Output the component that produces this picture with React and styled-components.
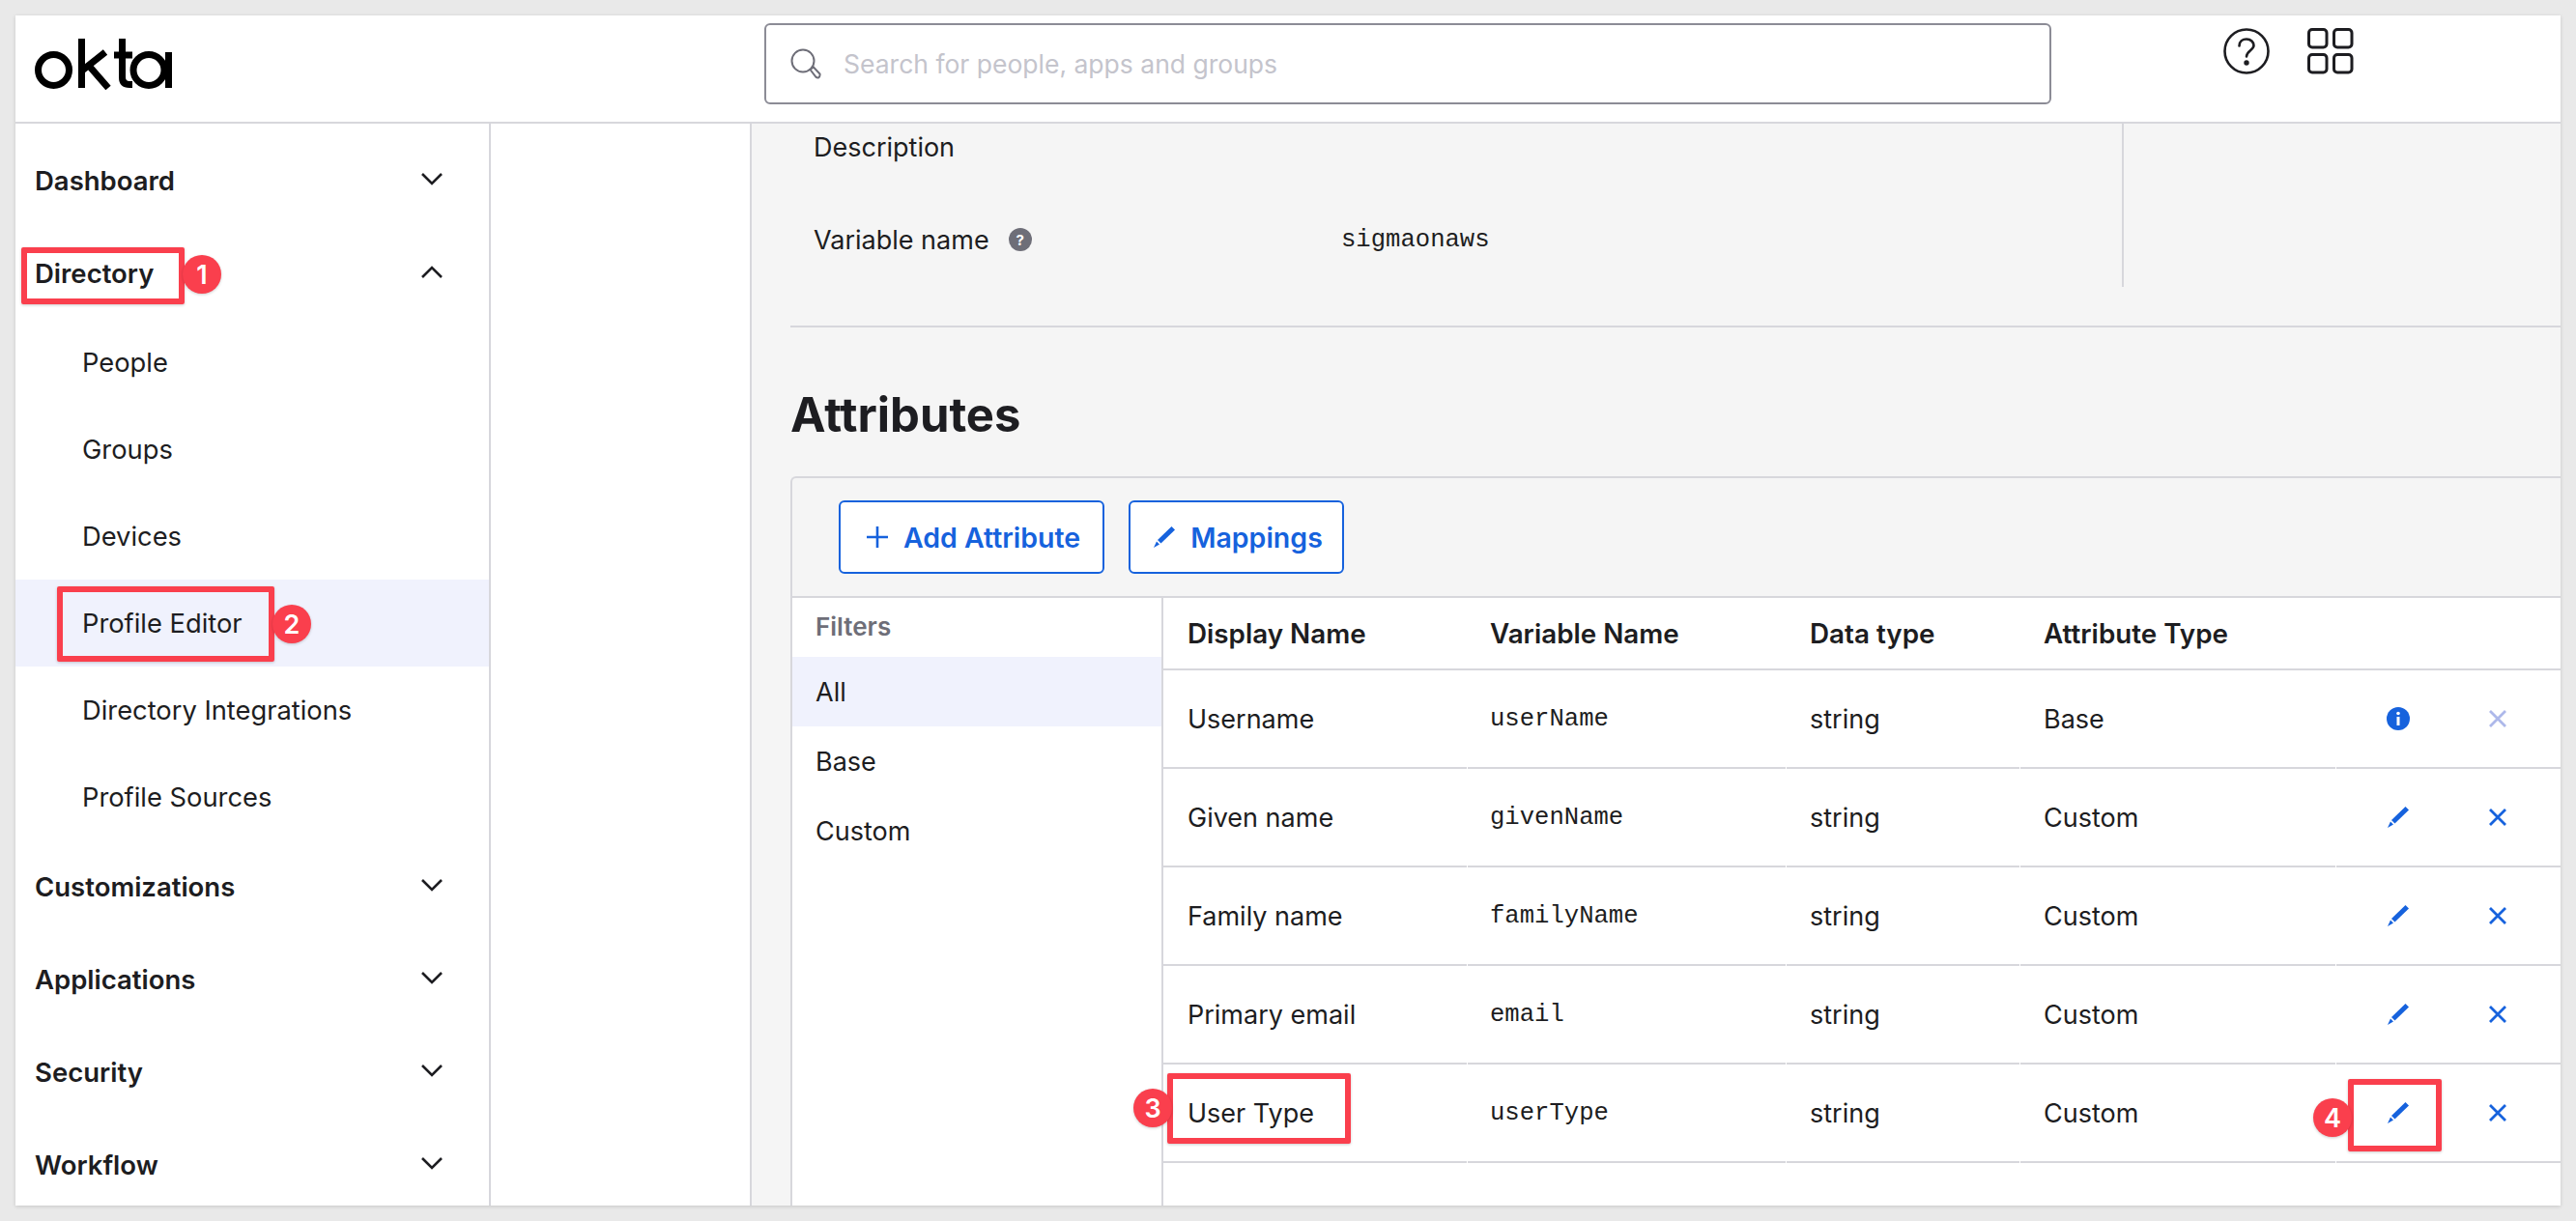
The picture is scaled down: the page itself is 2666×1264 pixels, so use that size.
import styled, { createGlobalStyle } from "styled-components";

const GlobalStyle = createGlobalStyle`
  * { box-sizing: border-box; }
  html, body { margin: 0; background: #e9e9e9; }
  body { font-family: Inter, "Liberation Sans", sans-serif; color: #1d1d21; }
`;

const Page = styled.div`
  padding: 16px;
  height: 1264px;
  overflow: hidden;
`;

const Frame = styled.div`
  position: relative;
  width: 2634px;
  height: 1232px;
  background: #fff;
  overflow: hidden;
  box-shadow: 0 1px 4px rgba(0, 0, 0, 0.15);
`;

const Header = styled.header`
  height: 112px;
  display: flex;
  align-items: flex-start;
  border-bottom: 2px solid #d7d7dc;
`;

const LogoWrap = styled.div`
  width: 775px;
  padding: 23px 0 0 20px;
`;

const SearchBox = styled.div`
  width: 1332px;
  height: 84px;
  margin-top: 8px;
  border: 2px solid #8c8c96;
  border-radius: 6px;
  display: flex;
  align-items: center;
  gap: 23px;
  padding-left: 25px;
`;

const Placeholder = styled.span`
  font-size: 26.5px;
  color: #c4c4cc;
`;

const HeaderIcons = styled.div`
  display: flex;
  align-items: center;
  gap: 39px;
  margin: 13px 0 0 178px;
`;

const Main = styled.div`
  display: flex;
  height: 1120px;
`;

const Sidebar = styled.nav`
  width: 492px;
  flex: none;
  padding-top: 11px;
  border-right: 2px solid #d7d7dc;
`;

const NavRow = styled.div`
  height: 96px;
  padding: 0 48px 0 20px;
  display: flex;
  align-items: center;
  justify-content: space-between;
  font-size: 27.5px;
  font-weight: 600;

  svg {
    margin-top: -3px;
  }
`;

const SubRow = styled.div`
  height: 90px;
  padding-left: 69px;
  display: flex;
  align-items: center;
  font-size: 27.3px;
  background: ${(p) => (p.$active ? "#f0f2fd" : "transparent")};
`;

const SubNav = styled.div`
  margin-top: -1px;
`;

const Rail = styled.div`
  width: 270px;
  flex: none;
  border-right: 2px solid #d7d7dc;
`;

const Content = styled.main`
  flex: 1;
  background: #f5f5f5;
  padding-left: 40px;
`;

const InfoPanel = styled.section`
  width: 1380px;
  height: 169px;
  padding: 8px 0 0 24px;
  border-right: 2px solid #d7d7dc;
`;

const InfoRow = styled.div`
  display: flex;
  align-items: center;
  height: 32px;
  margin-bottom: 64px;
  font-size: 27px;
`;

const InfoLabel = styled.div`
  width: 546px;
  display: flex;
  align-items: center;
  gap: 20px;
`;

const Mono = styled.span`
  font-family: "Liberation Mono", monospace;
  font-size: 25.6px;
`;

const HelpDot = styled.span`
  width: 24px;
  height: 24px;
  border-radius: 50%;
  background: #6e6e78;
  color: #fff;
  font-size: 15px;
  font-weight: 700;
  display: flex;
  align-items: center;
  justify-content: center;
`;

const Rule = styled.hr`
  height: 2px;
  margin: 40px 0 0;
  border: 0;
  background: #d7d7dc;
`;

const Heading = styled.h2`
  margin: 61px 0 33px;
  font-size: 49px;
  line-height: 60px;
  font-weight: 700;
`;

const Card = styled.section`
  height: 760px;
  border: 2px solid #d7d7dc;
  border-width: 2px 0 0 2px;
  border-top-left-radius: 6px;
`;

const Toolbar = styled.div`
  height: 124px;
  display: flex;
  align-items: center;
  gap: 25px;
  padding-left: 48px;
  border-bottom: 2px solid #d7d7dc;
`;

const Button = styled.button`
  height: 76px;
  width: ${(p) => p.$width}px;
  display: flex;
  align-items: center;
  justify-content: center;
  gap: 16px;
  background: #fff;
  color: #1662dd;
  border: 2px solid #1662dd;
  border-radius: 6px;
  font-family: inherit;
  font-size: 28.5px;
  font-weight: 600;
  padding: 0 0 0 4px;
`;

const CardBody = styled.div`
  display: flex;
  height: 640px;
  background: #fff;
`;

const Filters = styled.aside`
  width: 384px;
  flex: none;
  border-right: 2px solid #d7d7dc;
`;

const FilterTitle = styled.div`
  height: 61px;
  padding: 14px 0 0 24px;
  font-size: 26px;
  font-weight: 600;
  line-height: 32px;
  color: #6e6e78;
`;

const FilterItem = styled.div`
  height: 72px;
  padding-left: 24px;
  display: flex;
  align-items: center;
  font-size: 27px;
  background: ${(p) => (p.$active ? "#f0f2fd" : "transparent")};
`;

const Table = styled.div`
  flex: 1;
`;

const Columns = styled.div`
  display: grid;
  grid-template-columns: 315px 330px 242px 327px 1fr;
  height: ${(p) => p.$height}px;

  & > :first-child {
    padding-left: 25px;
  }

  & > :nth-child(2) {
    padding-left: 23px;
  }
`;

const HeadCell = styled.div`
  display: flex;
  align-items: center;
  padding-left: 24px;
  font-size: 27.8px;
  font-weight: 600;
  border-bottom: 2px solid #d7d7dc;
`;

const Cell = styled.div`
  display: flex;
  align-items: center;
  padding-left: 24px;
  font-size: 27px;
  margin-right: 1px;
  border-bottom: 2px solid #d7d7dc;
`;

const ActionCell = styled.div`
  display: grid;
  grid-template-columns: 128px 78px;
  align-items: center;
  justify-items: center;
  border-bottom: 2px solid #d7d7dc;
`;

const Callout = styled.div`
  position: absolute;
  left: ${(p) => p.$x - 16}px;
  top: ${(p) => p.$y - 16}px;
  width: ${(p) => p.$w}px;
  height: ${(p) => p.$h}px;
  border: 6px solid #fa3f4d;
  border-radius: 2px;
  box-shadow: 0 1px 3px rgba(0, 0, 0, 0.2);
`;

const Badge = styled.div`
  position: absolute;
  left: ${(p) => p.$x - 36}px;
  top: ${(p) => p.$y - 36}px;
  width: 40px;
  height: 40px;
  border-radius: 50%;
  background: #fa3f4d;
  color: #fff;
  font-size: 27px;
  font-weight: 600;
  display: flex;
  align-items: center;
  justify-content: center;
  box-shadow: 0 1px 3px rgba(0, 0, 0, 0.2);
`;

const OktaLogo = () => (
  <svg width="146" height="54" viewBox="0 0 146 54" fill="none" stroke="#000" strokeWidth="7">
    <circle cx="19.5" cy="33.5" r="16" />
    <path d="M48.5 1V52M49 34L73 15M56 29L76 52" />
    <path d="M90.5 1V41Q90.5 48.5 98 48.5H101M82 18H101" />
    <circle cx="118" cy="33.5" r="16" />
    <path d="M138.5 15V52" />
  </svg>
);

const HelpIcon = () => (
  <svg width="48" height="48" viewBox="0 0 48 48" fill="none" stroke="#1d1d21" strokeWidth="2.6" strokeLinecap="round">
    <circle cx="24" cy="24" r="22.5" />
    <path d="M16.5 18.5C16.5 14 20 11.5 24 11.5C28.5 11.5 31.5 14.5 31.5 18C31.5 23 24 23.5 24 29.5" />
    <circle cx="24" cy="36" r="1.4" fill="#1d1d21" />
  </svg>
);

const AppsIcon = () => (
  <svg width="48" height="48" viewBox="0 0 48 48" fill="none" stroke="#1d1d21" strokeWidth="3">
    <rect x="1.5" y="1.5" width="18.5" height="18.5" rx="3.5" />
    <rect x="27.5" y="1.5" width="18.5" height="18.5" rx="3.5" />
    <rect x="1.5" y="27.5" width="18.5" height="18.5" rx="3.5" />
    <rect x="27.5" y="27.5" width="18.5" height="18.5" rx="3.5" />
  </svg>
);

const SearchIcon = () => (
  <svg width="32" height="32" viewBox="0 0 32 32" fill="none" stroke="#6e6e78" strokeWidth="2">
    <circle cx="13" cy="13" r="11.5" />
    <path d="M20.5 22L24 19.5L30.5 26.5Q31 29 29 30.5Q27.5 30.8 26.5 29.8Z" />
  </svg>
);

const Chevron = ({ up }) => (
  <svg width="22" height="13" viewBox="0 0 22 13" fill="none" stroke="#1d1d21" strokeWidth="2.6">
    <path d={up ? "M1 12L11 2L21 12" : "M1 1L11 11L21 1"} />
  </svg>
);

const PencilIcon = () => (
  <svg width="22" height="22" viewBox="0 0 22 22" fill="#1662dd">
    <path d="M18.5 0L22 3.5L7.5 17.5L4 14Z" />
    <path d="M3 15.5L6 18.5L0 22Z" />
  </svg>
);

const PlusIcon = () => (
  <svg width="22" height="22" viewBox="0 0 22 22" stroke="#1662dd" strokeWidth="2.6">
    <path d="M11 0V22M0 11H22" />
  </svg>
);

const CloseIcon = ({ muted }) => (
  <svg width="18" height="18" viewBox="0 0 18 18" stroke={muted ? "#adb8ea" : "#1662dd"} strokeWidth="2.8">
    <path d="M1 1L17 17M17 1L1 17" />
  </svg>
);

const InfoIcon = () => (
  <svg width="24" height="24" viewBox="0 0 24 24">
    <circle cx="12" cy="12" r="12" fill="#1662dd" />
    <rect x="10.5" y="10" width="3" height="9" fill="#fff" />
    <circle cx="12" cy="6.5" r="1.8" fill="#fff" />
  </svg>
);

const topBefore = ["Dashboard"];
const subItems = ["People", "Groups", "Devices", "Profile Editor", "Directory Integrations", "Profile Sources"];
const topAfter = ["Customizations", "Applications", "Security", "Workflow"];

const attributes = [
  { name: "Username", variable: "userName", type: "Base", locked: true },
  { name: "Given name", variable: "givenName", type: "Custom" },
  { name: "Family name", variable: "familyName", type: "Custom" },
  { name: "Primary email", variable: "email", type: "Custom" },
  { name: "User Type", variable: "userType", type: "Custom" },
];

const App = () => {
  return (
    <Page>
      <GlobalStyle />
      <Frame>
        <Header>
          <LogoWrap>
            <OktaLogo />
          </LogoWrap>
          <SearchBox>
            <SearchIcon />
            <Placeholder>Search for people, apps and groups</Placeholder>
          </SearchBox>
          <HeaderIcons>
            <HelpIcon />
            <AppsIcon />
          </HeaderIcons>
        </Header>
        <Main>
          <Sidebar>
            {topBefore.map((item) => (
              <NavRow key={item}>
                {item}
                <Chevron />
              </NavRow>
            ))}
            <NavRow>
              Directory
              <Chevron up />
            </NavRow>
            <SubNav>
              {subItems.map((item) => (
                <SubRow key={item} $active={item === "Profile Editor"}>
                  {item}
                </SubRow>
              ))}
            </SubNav>
            {topAfter.map((item) => (
              <NavRow key={item}>
                {item}
                <Chevron />
              </NavRow>
            ))}
          </Sidebar>
          <Rail />
          <Content>
            <InfoPanel>
              <InfoRow>Description</InfoRow>
              <InfoRow>
                <InfoLabel>
                  Variable name
                  <HelpDot>?</HelpDot>
                </InfoLabel>
                <Mono>sigmaonaws</Mono>
              </InfoRow>
            </InfoPanel>
            <Rule />
            <Heading>Attributes</Heading>
            <Card>
              <Toolbar>
                <Button $width={275}>
                  <PlusIcon />
                  Add Attribute
                </Button>
                <Button $width={223}>
                  <PencilIcon />
                  Mappings
                </Button>
              </Toolbar>
              <CardBody>
                <Filters>
                  <FilterTitle>Filters</FilterTitle>
                  <FilterItem $active>All</FilterItem>
                  <FilterItem>Base</FilterItem>
                  <FilterItem>Custom</FilterItem>
                </Filters>
                <Table>
                  <Columns $height={75}>
                    <HeadCell>Display Name</HeadCell>
                    <HeadCell>Variable Name</HeadCell>
                    <HeadCell>Data type</HeadCell>
                    <HeadCell>Attribute Type</HeadCell>
                    <HeadCell />
                  </Columns>
                  {attributes.map((attr) => (
                    <Columns key={attr.variable} $height={102}>
                      <Cell>{attr.name}</Cell>
                      <Cell>
                        <Mono>{attr.variable}</Mono>
                      </Cell>
                      <Cell>string</Cell>
                      <Cell>{attr.type}</Cell>
                      <ActionCell>
                        {attr.locked ? <InfoIcon /> : <PencilIcon />}
                        <CloseIcon muted={attr.locked} />
                      </ActionCell>
                    </Columns>
                  ))}
                </Table>
              </CardBody>
            </Card>
          </Content>
        </Main>
        <Callout $x={22} $y={256} $w={169} $h={59} />
        <Badge $x={209} $y={284}>1</Badge>
        <Callout $x={59} $y={607} $w={225} $h={78} />
        <Badge $x={302} $y={646}>2</Badge>
        <Callout $x={1208} $y={1111} $w={190} $h={73} />
        <Badge $x={1193} $y={1147}>3</Badge>
        <Callout $x={2430} $y={1117} $w={97} $h={75} />
        <Badge $x={2414} $y={1157}>4</Badge>
      </Frame>
    </Page>
  );
};

export default App;
